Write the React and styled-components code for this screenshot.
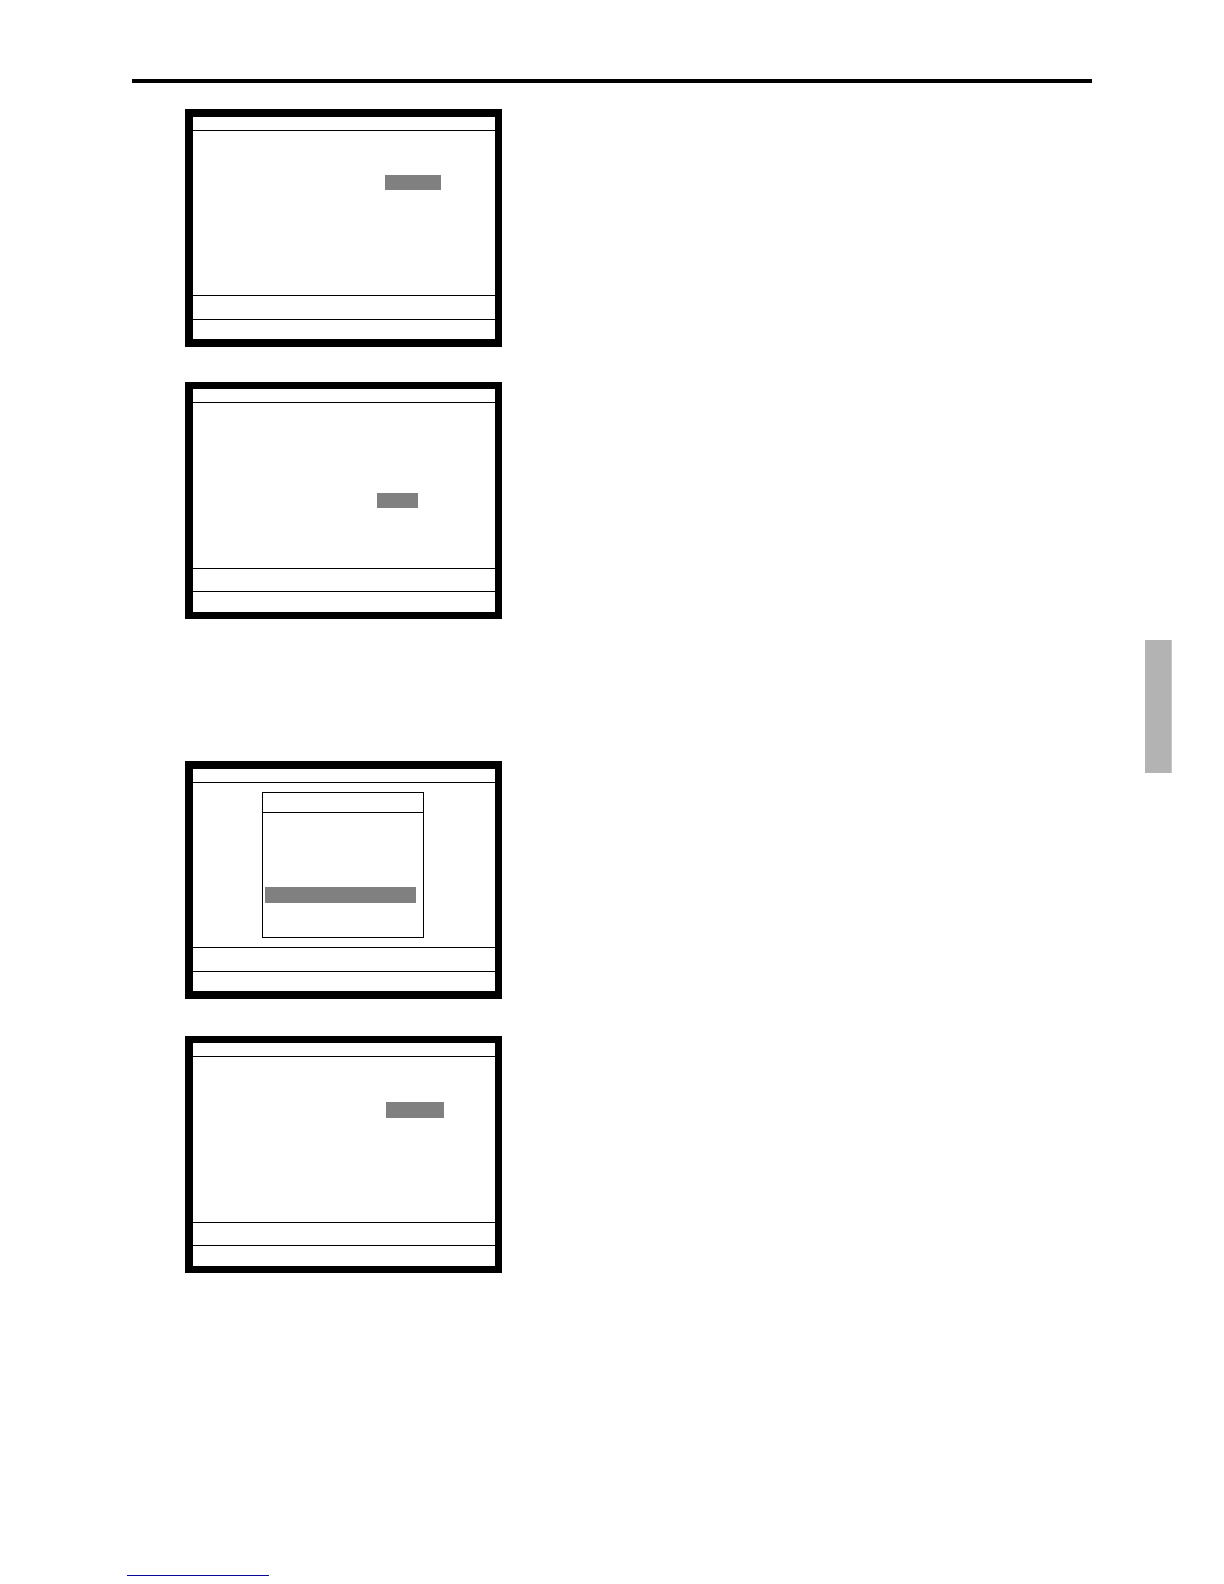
import styled, { createGlobalStyle } from 'styled-components'

const Ink = '#000000'
const Paper = '#ffffff'
const Marker = '#808080'
const TabGray = '#b3b3b3'
const LinkBlue = '#08089a'

const GlobalStyle = createGlobalStyle`
    * {
        box-sizing: border-box;
    }

    body {
        margin: 0;
        background-color: ${Paper};
        color: ${Ink};
        font-family: "Liberation Sans", sans-serif;
    }
`

const Page = styled.div`
    min-height: 100vh;
    display: flex;
    flex-direction: column;
    justify-content: space-between;
`

const Sheet = styled.div`
    display: grid;
    grid-template-columns: minmax(0, 1fr) 27px;
    column-gap: 53px;
    padding: 79px 52px 0 132px;
`

const Content = styled.main`
    display: flex;
    flex-direction: column;
`

const Rule = styled.hr`
    width: 100%;
    height: 4px;
    margin: 0 0 26px;
    border: 0;
    background-color: ${Ink};
`

const Section = styled.section`
    display: flex;
    flex-direction: column;
    gap: ${({ $gap }) => $gap}px;
    padding-left: 53px;

    & + & {
        margin-top: 142px;
    }
`

const Screen = styled.article`
    width: 100%;
    max-width: 317px;
    border: solid ${Ink};
    border-width: ${({ $frame }) => `${$frame}px 7px ${$frame}px 8px`};
`

const TitleBar = styled.header`
    height: 14px;
    border-bottom: 1px solid ${Ink};
`

const Body = styled.div`
    display: flex;
    align-items: flex-start;
    height: ${({ $height }) => $height}px;
`

const StatusBar = styled.div`
    height: ${({ $height }) => $height}px;
    border-top: 1px solid ${Ink};
`

const Highlight = styled.div`
    width: ${({ $width }) => $width}px;
    height: ${({ $height }) => $height}px;
    margin: ${({ $top, $left }) => `${$top}px 0 0 ${$left}px`};
    background-color: ${Marker};
`

const Menu = styled.div`
    width: 162px;
    height: 146px;
    margin: 9px auto 0 69px;
    border: 1px solid ${Ink};
`

const MenuTitle = styled.div`
    height: 20px;
    border-bottom: 1px solid ${Ink};
`

const ChapterTab = styled.aside`
    height: 133px;
    margin-top: 561px;
    border-right: 1px solid #c6c6c6;
    background-color: ${TabGray};
`

const Footer = styled.footer`
    display: flex;
    padding: 0 127px 8px;
`

const FooterLink = styled.a`
    width: 142px;
    height: 12px;
    border-bottom: 1px solid ${LinkBlue};
`

// frame 8 goes with the shorter body, frame 7 with the taller one
const Display = ({ frame, children }) => {
    const thick = frame === 8

    return (
        <Screen $frame={frame}>
            <TitleBar />
            <Body $height={thick ? 164 : 165}>{children}</Body>
            <StatusBar $height={thick ? 24 : 23} />
            <StatusBar $height={thick ? 20 : 21} />
        </Screen>
    )
}

const App = () => {
    return (
        <Page>
            <GlobalStyle />
            <Sheet>
                <Content>
                    <Rule />
                    <Section $gap={35}>
                        <Display frame={8}>
                            <Highlight $top={44} $left={192} $width={56} $height={15} />
                        </Display>
                        <Display frame={7}>
                            <Highlight $top={90} $left={184} $width={41} $height={15} />
                        </Display>
                    </Section>
                    <Section $gap={37}>
                        <Display frame={8}>
                            <Menu>
                                <MenuTitle />
                                <Highlight $top={74} $left={2} $width={151} $height={16} />
                            </Menu>
                        </Display>
                        <Display frame={7}>
                            <Highlight $top={45} $left={193} $width={58} $height={16} />
                        </Display>
                    </Section>
                </Content>
                <ChapterTab />
            </Sheet>
            <Footer>
                <FooterLink href="#" aria-label="Contents" />
            </Footer>
        </Page>
    )
}

export default App;
